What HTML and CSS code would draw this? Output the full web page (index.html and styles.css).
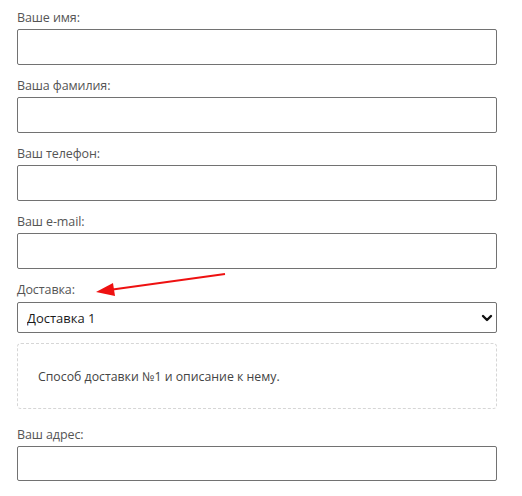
FILE: index.html
```html
<!DOCTYPE html>
<html lang="ru">
<head>
<meta charset="utf-8">
<link rel="stylesheet" href="styles.css">
</head>
<body>
<form class="form">
  <div class="field">
    <label class="label">Ваше имя:</label>
    <input class="input" type="text">
  </div>
  <div class="field">
    <label class="label">Ваша фамилия:</label>
    <input class="input" type="text">
  </div>
  <div class="field">
    <label class="label">Ваш телефон:</label>
    <input class="input" type="text">
  </div>
  <div class="field">
    <label class="label">Ваш e-mail:</label>
    <input class="input" type="text">
  </div>
  <div class="field field-delivery">
    <label class="label">Доставка:</label>
    <div class="select-wrap">
      <select class="select">
        <option>Доставка 1</option>
      </select>
      <svg class="chevron" width="12" height="8" viewBox="0 0 12 8"><path d="M2 2 L6 6 L10 2" fill="none" stroke="#111" stroke-width="2.4" stroke-linecap="round" stroke-linejoin="round"/></svg>
    </div>
    <svg class="arrow" width="140" height="30" viewBox="0 0 140 30">
      <line x1="130" y1="5" x2="14" y2="21" stroke="#ee1111" stroke-width="2"/>
      <polygon points="1,23 18,14 20,27" fill="#ee1111"/>
    </svg>
  </div>
  <div class="note">Способ доставки №1 и описание к нему.</div>
  <div class="field">
    <label class="label">Ваш адрес:</label>
    <input class="input input-last" type="text">
  </div>
</form>
</body>
</html>
```

FILE: styles.css
```css
html, body {
  margin: 0;
  padding: 0;
  background: #fff;
}
body {
  font-family: "Open Sans", "Noto Sans", sans-serif;
}
.form {
  width: 480px;
  padding: 9px 0 0 17px;
  display: flex;
  flex-direction: column;
}
.field {
  display: flex;
  flex-direction: column;
  margin-bottom: 12px;
}
.label {
  display: block;
  font-size: 12.5px;
  line-height: 18px;
  color: #555;
  margin-bottom: 2px;
  letter-spacing: -0.1px;
}
.input {
  box-sizing: border-box;
  width: 480px;
  height: 36px;
  margin: 0;
  border: 1px solid #727272;
  border-radius: 2px;
  background: #fff;
  outline: none;
  padding: 0 9px;
}
.input-last {
  height: 35px;
}
.field-delivery {
  position: relative;
  margin-bottom: 10px;
}
.select-wrap {
  position: relative;
  margin-top: 1px;
}
.select {
  box-sizing: border-box;
  width: 480px;
  height: 31px;
  margin: 0;
  border: 1px solid #727272;
  border-radius: 2px;
  background: #fff;
  appearance: none;
  -webkit-appearance: none;
  font-family: "Open Sans", "Noto Sans", sans-serif;
  font-size: 13px;
  color: #1a1a1a;
  padding: 0 9px;
  outline: none;
}
.chevron {
  position: absolute;
  right: 4px;
  top: 12px;
}
.arrow {
  position: absolute;
  left: 78px;
  top: -12px;
}
.note {
  box-sizing: border-box;
  width: 480px;
  height: 66px;
  border: 1px dashed #d6d6d6;
  border-radius: 4px;
  display: flex;
  align-items: center;
  padding: 0 20px;
  font-size: 12.3px;
  color: #444;
  margin-bottom: 17px;
}
```
